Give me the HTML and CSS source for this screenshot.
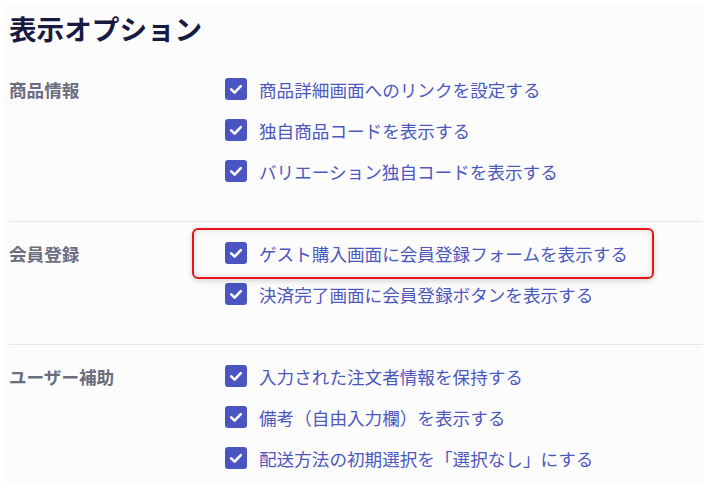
FILE: index.html
```html
<!DOCTYPE html>
<html lang="ja">
<head>
<meta charset="utf-8">
<title>表示オプション</title>
<link rel="stylesheet" href="styles.css">
</head>
<body>
<div class="panel">
  <h1 class="title">表示オプション</h1>

  <section class="group">
    <div class="group-label">商品情報</div>
    <ul class="options">
      <li class="option"><span class="box"><svg viewBox="0 0 22 22"><path d="M6.2 11.4 9.6 14.6 15.8 8.2"/></svg></span><span class="text">商品詳細画面へのリンクを設定する</span></li>
      <li class="option"><span class="box"><svg viewBox="0 0 22 22"><path d="M6.2 11.4 9.6 14.6 15.8 8.2"/></svg></span><span class="text">独自商品コードを表示する</span></li>
      <li class="option"><span class="box"><svg viewBox="0 0 22 22"><path d="M6.2 11.4 9.6 14.6 15.8 8.2"/></svg></span><span class="text">バリエーション独自コードを表示する</span></li>
    </ul>
  </section>

  <section class="group">
    <div class="group-label">会員登録</div>
    <ul class="options">
      <li class="option highlight"><span class="box"><svg viewBox="0 0 22 22"><path d="M6.2 11.4 9.6 14.6 15.8 8.2"/></svg></span><span class="text">ゲスト購入画面に会員登録フォームを表示する</span></li>
      <li class="option"><span class="box"><svg viewBox="0 0 22 22"><path d="M6.2 11.4 9.6 14.6 15.8 8.2"/></svg></span><span class="text">決済完了画面に会員登録ボタンを表示する</span></li>
    </ul>
  </section>

  <section class="group last">
    <div class="group-label">ユーザー補助</div>
    <ul class="options">
      <li class="option"><span class="box"><svg viewBox="0 0 22 22"><path d="M6.2 11.4 9.6 14.6 15.8 8.2"/></svg></span><span class="text">入力された注文者情報を保持する</span></li>
      <li class="option"><span class="box"><svg viewBox="0 0 22 22"><path d="M6.2 11.4 9.6 14.6 15.8 8.2"/></svg></span><span class="text">備考（自由入力欄）を表示する</span></li>
      <li class="option"><span class="box"><svg viewBox="0 0 22 22"><path d="M6.2 11.4 9.6 14.6 15.8 8.2"/></svg></span><span class="text">配送方法の初期選択を「選択なし」にする</span></li>
    </ul>
  </section>
</div>
</body>
</html>
```

FILE: styles.css
```css
* { box-sizing: border-box; }

html, body {
  margin: 0;
  padding: 0;
  background: #ffffff;
}

body {
  font-family: "Noto Sans CJK JP", "Noto Sans", sans-serif;
  width: 708px;
  height: 490px;
  overflow: hidden;
}

.panel {
  margin: 5px 5px 0 5px;
  height: 480px;
  background: #fcfcfd;
  padding: 5px 0 0 4px;
}

.title {
  margin: 0 0 11.5px 0;
  font-size: 27.6px;
  line-height: 36px;
  font-weight: 700;
  color: #181b3f;
  letter-spacing: 0;
}

.group {
  display: grid;
  grid-template-columns: 216px 1fr;
  padding: 11px 0 29px 0;
}

.group + .group {
  border-top: 1px solid #e4e5ef;
}

.group.last {
  padding-bottom: 4px;
}

.group-label {
  font-size: 17.6px;
  font-weight: 700;
  color: #6b6d7f;
  line-height: 41px;
  height: 41px;
}

.options {
  list-style: none;
  margin: 0;
  padding: 0;
}

.option {
  display: flex;
  align-items: center;
  gap: 12px;
  height: 41px;
  width: fit-content;
}

.box {
  width: 22px;
  height: 22px;
  border-radius: 3px;
  background: #4a55c2;
  flex: none;
  display: flex;
}

.box svg {
  width: 22px;
  height: 22px;
}

.box path {
  fill: none;
  stroke: #ffffff;
  stroke-width: 2.6;
  stroke-linecap: round;
  stroke-linejoin: round;
}

.text {
  font-size: 17.6px;
  color: #4d58bf;
  line-height: 41px;
  white-space: nowrap;
}

.highlight {
  position: relative;
}

.highlight::before {
  content: "";
  position: absolute;
  left: -33px;
  right: -26px;
  top: -5px;
  bottom: -5px;
  border: 2px solid #e8141c;
  border-radius: 6px;
  box-shadow: inset 0 0 7px rgba(0, 0, 0, 0.14), 0 2px 6px rgba(0, 0, 0, 0.16);
  pointer-events: none;
}
```
